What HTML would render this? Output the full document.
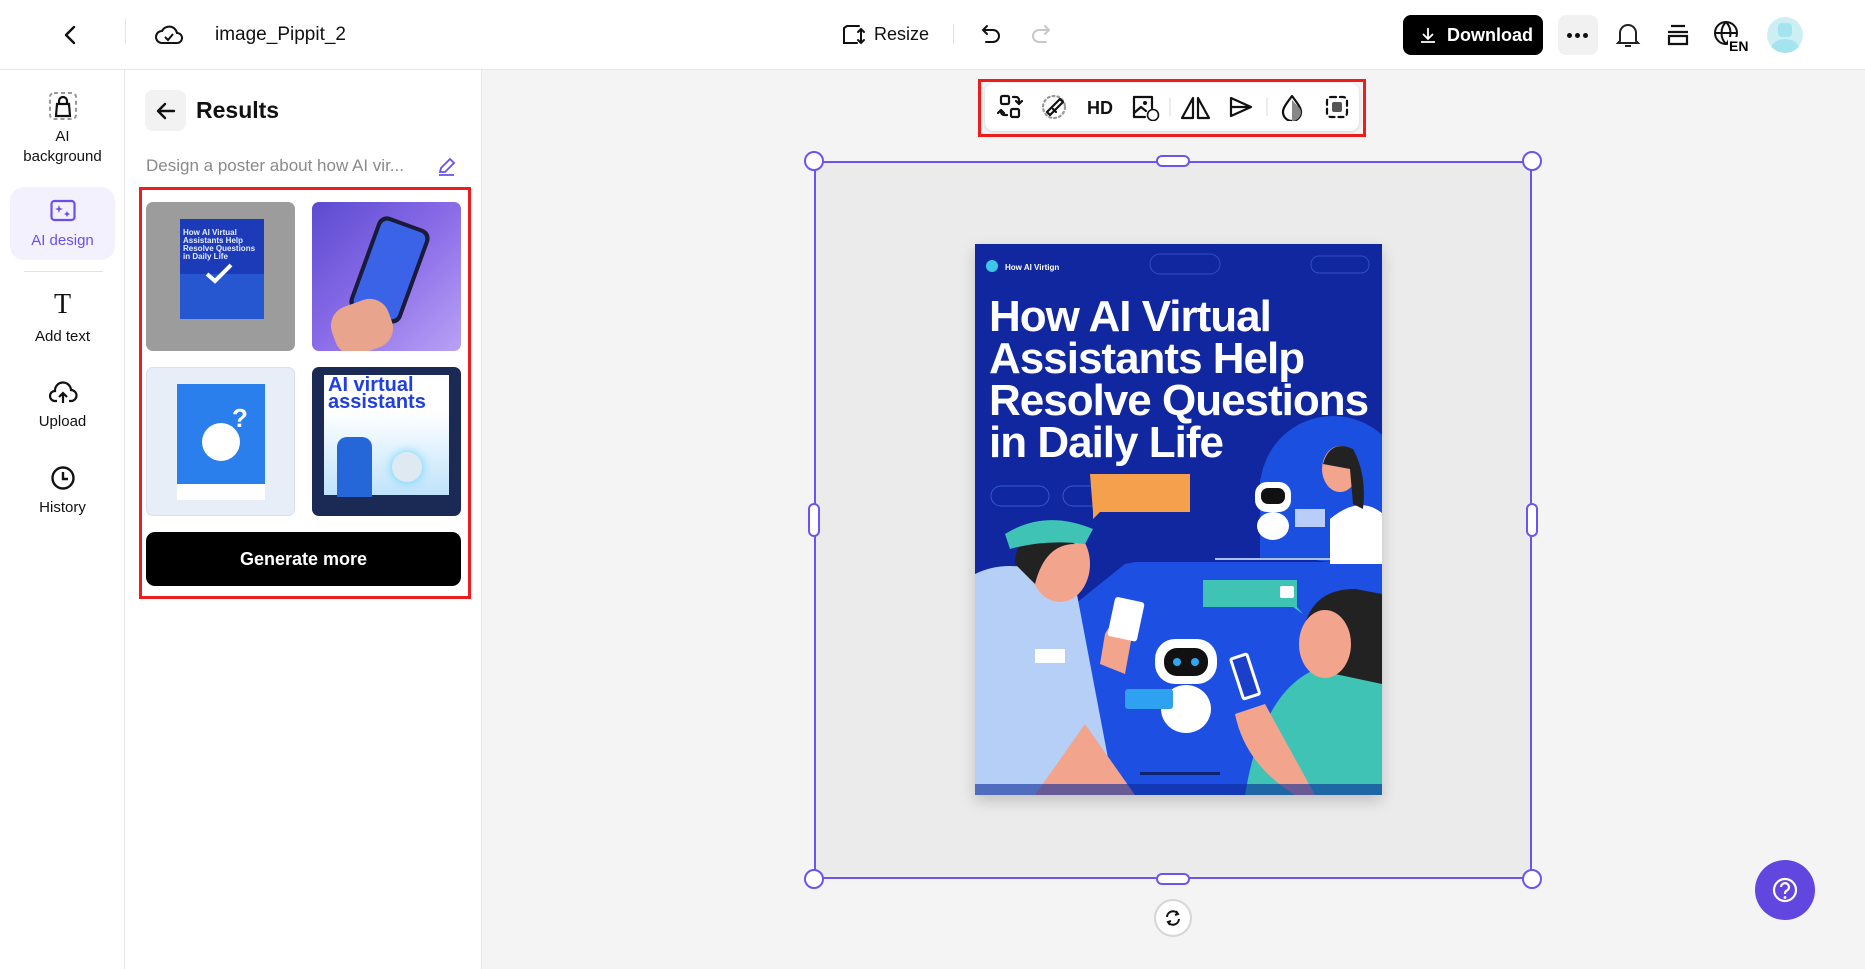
<!DOCTYPE html>
<html><head><meta charset="utf-8"><style>
*{margin:0;padding:0;box-sizing:border-box}
body{width:1865px;height:969px;overflow:hidden;background:#f4f4f4;font-family:"Liberation Sans",sans-serif;position:relative;color:#111}
.abs{position:absolute}
svg{display:block}
.top{left:0;top:0;width:1865px;height:70px;background:#fff;border-bottom:1px solid #e6e6e6}
.rail{left:0;top:70px;width:125px;height:899px;background:#fff;border-right:1px solid #e6e6e6}
.panel{left:125px;top:70px;width:357px;height:899px;background:#fff;border-right:1px solid #e6e6e6}
.lbl{width:125px;text-align:center;font-size:15px;color:#111;line-height:20px}
.thumb{border-radius:7px;overflow:hidden}
</style></head><body>
<div class="abs top"></div>
<div class="abs rail"></div>
<div class="abs panel"></div>

<!-- top bar -->
<svg class="abs" style="left:60px;top:24px" width="22" height="22" viewBox="0 0 22 22"><path d="M14 3 L6 11 L14 19" fill="none" stroke="#111" stroke-width="2.4" stroke-linecap="round" stroke-linejoin="round"/></svg>
<div class="abs" style="left:125px;top:18px;width:1px;height:26px;background:#e6e6e6"></div>
<svg class="abs" style="left:154px;top:22px" width="30" height="24" viewBox="0 0 30 24"><path d="M8 21 H23 A5 5 0 0 0 23 11 A8 8 0 0 0 8 9 A6 6 0 0 0 8 21 Z" fill="none" stroke="#111" stroke-width="2"/><path d="M11 15 L14 18 L19 12" fill="none" stroke="#111" stroke-width="2"/></svg>
<div class="abs" style="left:215px;top:24px;font-size:19px;width:130px;overflow:hidden;white-space:nowrap">image_Pippit_20</div>

<svg class="abs" style="left:841px;top:23px" width="26" height="24" viewBox="0 0 26 24"><path d="M3 5 V20 H16 M6 3 H18 M3 5 L6 3 M20 6 V20 M17 9 L20 6 L23 9 M17 17 L20 20 L23 17" fill="none" stroke="#111" stroke-width="2" stroke-linecap="round"/></svg>
<div class="abs" style="left:874px;top:24px;font-size:18px">Resize</div>
<div class="abs" style="left:953px;top:24px;width:1px;height:20px;background:#e0e0e0"></div>
<svg class="abs" style="left:979px;top:22px" width="24" height="24" viewBox="0 0 24 24"><path d="M8 4 L4 8 L8 12 M4 8 H14 A6 6 0 0 1 14 20 H7" fill="none" stroke="#111" stroke-width="2" stroke-linecap="round"/></svg>
<svg class="abs" style="left:1029px;top:22px" width="24" height="24" viewBox="0 0 24 24"><path d="M16 4 L20 8 L16 12 M20 8 H10 A6 6 0 0 0 10 20 H17" fill="none" stroke="#c8c8c8" stroke-width="2" stroke-linecap="round"/></svg>

<div class="abs" style="left:1403px;top:15px;width:140px;height:40px;background:#000;border-radius:8px;color:#fff;font-weight:bold;font-size:18px;line-height:40px;padding-left:44px">Download</div>
<svg class="abs" style="left:1419px;top:26px" width="18" height="18" viewBox="0 0 18 18"><path d="M9 2 V12 M4 8 L9 13 L14 8 M2 16 H16" fill="none" stroke="#fff" stroke-width="1.8"/></svg>
<div class="abs" style="left:1558px;top:15px;width:40px;height:40px;background:#f1f1f1;border-radius:8px"></div>
<div class="abs" style="left:1567px;top:33px;width:5px;height:5px;border-radius:50%;background:#111;box-shadow:8px 0 #111,16px 0 #111"></div>
<svg class="abs" style="left:1615px;top:21px" width="26" height="28" viewBox="0 0 26 28"><path d="M5 20 V12 A8 8 0 0 1 21 12 V20 L23 22 H3 Z M10 25 H16" fill="none" stroke="#222" stroke-width="2"/></svg>
<svg class="abs" style="left:1666px;top:22px" width="24" height="26" viewBox="0 0 24 26"><path d="M5 4 H19 M2 10 H22 M3 14 H21 V22 H3 Z" fill="none" stroke="#111" stroke-width="2.2"/></svg>
<svg class="abs" style="left:1713px;top:20px" width="36" height="32" viewBox="0 0 36 32"><circle cx="13" cy="13" r="11" fill="none" stroke="#111" stroke-width="2"/><path d="M2 13 H24 M13 2 C7 8 7 18 13 24 M13 2 C19 8 19 18 13 24" fill="none" stroke="#111" stroke-width="2"/><rect x="15" y="17" width="21" height="15" fill="#fff"/><text x="16" y="31" font-size="14" font-weight="bold" font-family="Liberation Sans">EN</text></svg>
<div class="abs" style="left:1767px;top:17px;width:36px;height:36px;border-radius:50%;background:#cdeff4;overflow:hidden"><div style="position:absolute;left:11px;top:6px;width:14px;height:14px;background:#a4e4ee;border-radius:4px"></div><div style="position:absolute;left:4px;top:22px;width:28px;height:20px;background:#a4e4ee;border-radius:50%"></div></div>

<!-- rail -->
<svg class="abs" style="left:49px;top:92px" width="28" height="28" viewBox="0 0 28 28"><rect x="1" y="1" width="26" height="26" rx="4" fill="none" stroke="#999" stroke-width="2" stroke-dasharray="4 3"/><path d="M7 24 L8 12 H20 L21 24 Z M10 12 V9 A4 4 0 0 1 18 9 V12" fill="none" stroke="#111" stroke-width="2.2"/></svg>
<div class="abs lbl" style="left:0;top:127px">AI<br>background</div>
<div class="abs" style="left:10px;top:187px;width:105px;height:73px;background:#f3f1fe;border-radius:14px"></div>
<svg class="abs" style="left:50px;top:199px" width="26" height="24" viewBox="0 0 26 24"><rect x="1.5" y="2" width="23" height="19" rx="3" fill="none" stroke="#6a4ff0" stroke-width="2.2"/><path d="M9 6 L10 9 L13 10 L10 11 L9 14 L8 11 L5 10 L8 9 Z M17 12 L18 14 L20 15 L18 16 L17 18 L16 16 L14 15 L16 14Z" fill="#6a4ff0"/></svg>
<div class="abs lbl" style="left:0;top:231px;color:#6a4ff0">AI design</div>
<div class="abs" style="left:24px;top:271px;width:79px;height:1px;background:#e3e3e3"></div>
<div class="abs lbl" style="left:0;top:290px;font-size:28px;line-height:30px;font-family:'Liberation Serif',serif">T</div>
<div class="abs lbl" style="left:0;top:327px">Add text</div>
<svg class="abs" style="left:48px;top:380px" width="30" height="26" viewBox="0 0 30 26"><path d="M9 21 H7 A5 5 0 0 1 7 11 A8 8 0 0 1 23 10 A5.5 5.5 0 0 1 23 21 H21 M15 23 V13 M11 17 L15 13 L19 17" fill="none" stroke="#111" stroke-width="2.2"/></svg>
<div class="abs lbl" style="left:0;top:412px">Upload</div>
<svg class="abs" style="left:50px;top:465px" width="26" height="26" viewBox="0 0 26 26"><circle cx="13" cy="13" r="10.5" fill="none" stroke="#111" stroke-width="2.4"/><path d="M13 7 V14 H18" fill="none" stroke="#111" stroke-width="2.4"/></svg>
<div class="abs lbl" style="left:0;top:498px">History</div>

<!-- panel -->
<div class="abs" style="left:145px;top:90px;width:41px;height:41px;background:#f2f2f2;border-radius:8px"></div>
<svg class="abs" style="left:155px;top:100px" width="22" height="22" viewBox="0 0 22 22"><path d="M19 11 H3 M10 4 L3 11 L10 18" fill="none" stroke="#111" stroke-width="2.4" stroke-linecap="round" stroke-linejoin="round"/></svg>
<div class="abs" style="left:196px;top:97px;font-size:23px;font-weight:bold">Results</div>
<div class="abs" style="left:146px;top:156px;font-size:17px;color:#8a8a8a">Design a poster about how AI vir...</div>
<svg class="abs" style="left:437px;top:157px" width="20" height="20" viewBox="0 0 20 20"><path d="M3 15 L4 11 L13 2 L17 6 L8 15 Z M2 18 H17" fill="none" stroke="#6a4ff0" stroke-width="1.8"/></svg>
<div class="abs" style="left:139px;top:187px;width:332px;height:412px;border:3px solid #ee1c1c"></div>

<div class="abs thumb" style="left:146px;top:202px;width:149px;height:149px;background:#9c9c9c">
 <div style="position:absolute;left:34px;top:17px;width:84px;height:100px;background:#1c3bb8">
  <div style="position:absolute;left:3px;top:10px;font-size:8px;line-height:8px;color:#e8ecff;font-weight:bold">How AI Virtual Assistants Help Resolve Questions in Daily Life</div>
  <div style="position:absolute;left:0;bottom:0;width:84px;height:45px;background:#2a5fd6;opacity:.8"></div>
 </div>
 <svg style="position:absolute;left:58px;top:60px" width="30" height="22" viewBox="0 0 30 22"><path d="M3 12 L11 19 L27 3" fill="none" stroke="#fff" stroke-width="4"/></svg>
</div>
<div class="abs thumb" style="left:312px;top:202px;width:149px;height:149px;background:linear-gradient(135deg,#5b4bd0,#8a6ce8 50%,#b8a2f4)">
 <div style="position:absolute;left:50px;top:18px;width:55px;height:100px;background:#1a1a3a;border-radius:10px;transform:rotate(20deg)"><div style="position:absolute;left:4px;top:4px;right:4px;bottom:4px;background:#3b63e8;border-radius:7px"></div></div>
 <div style="position:absolute;left:20px;top:100px;width:60px;height:50px;background:#e8a48c;border-radius:20px;transform:rotate(-20deg)"></div>
</div>
<div class="abs thumb" style="left:146px;top:367px;width:149px;height:149px;background:#e7eef8;border:1px solid #d8e0ea">
 <div style="position:absolute;left:30px;top:16px;width:88px;height:100px;background:#2b7fec"></div>
 <div style="position:absolute;left:30px;top:116px;width:88px;height:16px;background:#fff"></div>
 <div style="position:absolute;left:55px;top:55px;width:38px;height:38px;border-radius:50%;background:#fff"></div>
 <div style="position:absolute;left:85px;top:35px;color:#fff;font-weight:bold;font-size:26px">?</div>
</div>
<div class="abs thumb" style="left:312px;top:367px;width:149px;height:149px;background:#1a2a55">
 <div style="position:absolute;left:12px;top:8px;width:125px;height:120px;background:linear-gradient(#fff 30%,#bfe3fb)"></div>
 <div style="position:absolute;left:16px;top:10px;font-size:20px;line-height:17px;font-weight:bold;color:#1f3fe0">AI virtual<br>assistants</div>
 <div style="position:absolute;left:25px;top:70px;width:35px;height:60px;background:#2566d8;border-radius:10px 10px 0 0"></div>
 <div style="position:absolute;left:80px;top:85px;width:30px;height:30px;background:#dfe9f2;border-radius:50%;box-shadow:0 0 10px #5fd3ff"></div>
</div>
<div class="abs" style="left:146px;top:532px;width:315px;height:54px;background:#000;border-radius:9px;color:#fff;font-weight:bold;font-size:18px;text-align:center;line-height:54px">Generate more</div>

<!-- floating toolbar -->
<div class="abs" style="left:985px;top:83px;width:374px;height:48px;background:#fff;border-radius:9px;box-shadow:0 1px 4px rgba(0,0,0,.12)"></div>
<div class="abs" style="left:978px;top:79px;width:388px;height:58px;border:3px solid #ee1c1c"></div>
<svg class="abs" style="left:997px;top:93px" width="362" height="28" viewBox="0 0 362 28">
 <g fill="none" stroke="#111" stroke-width="2.2" stroke-linecap="round" stroke-linejoin="round">
  <rect x="4" y="3" width="8" height="8" rx="1.5"/><rect x="14" y="16" width="8" height="8" rx="1.5"/>
  <path d="M16 4 H19 A3 3 0 0 1 22 7 V10 M19 8 L22 11 L25 8 M10 22 H7 A3 3 0 0 1 4 19 V17 M1 20 L4 17 L7 20"/>
  <circle cx="57" cy="14" r="11" stroke="#999" stroke-dasharray="2 3"/>
  <path d="M53 22 L50 19 L63 6 L66 9 Z M56 16 L59 19"/>
  <path d="M137 4 H155 V15 M137 4 V24 H148 M137 20 L144 14 L149 18"/>
  <path d="M196 5 V25 H185 Z M201 5 V25 H212 Z"/>
  <path d="M234 5 L254 14 L234 23 Z M234 14 H254"/>
  <path d="M295 3 C289 11 286 15 286 19 A9 9 0 0 0 304 19 C304 15 301 11 295 3 Z"/>
  <rect x="330" y="4" width="20" height="20" rx="4" stroke-dasharray="5 4"/>
 </g>
 <text x="90" y="21" font-family="Liberation Sans" font-weight="bold" font-size="18" fill="#111">HD</text>
 <circle cx="156" cy="22" r="5.5" fill="#fff" stroke="#111" stroke-width="1.6"/>
 <circle cx="148" cy="10" r="2" fill="#111"/>
 <path d="M295 7 C299 12 304 15 304 19 A9 9 0 0 1 295 28 Z" fill="#888"/>
 <rect x="335" y="9" width="10" height="10" rx="2" fill="#555"/>
 <path d="M173 5 V23 M270 5 V23" stroke="#e0e0e0" stroke-width="1.2"/>
</svg>

<!-- artboard / selection -->
<div class="abs" style="left:814px;top:161px;width:718px;height:718px;background:#ebebeb;border:2.5px solid #6a55f0"></div>
<div class="abs" style="left:804px;top:151px;width:20px;height:20px;border-radius:50%;background:#fff;border:2.5px solid #6a55f0"></div>
<div class="abs" style="left:1522px;top:151px;width:20px;height:20px;border-radius:50%;background:#fff;border:2.5px solid #6a55f0"></div>
<div class="abs" style="left:804px;top:869px;width:20px;height:20px;border-radius:50%;background:#fff;border:2.5px solid #6a55f0"></div>
<div class="abs" style="left:1522px;top:869px;width:20px;height:20px;border-radius:50%;background:#fff;border:2.5px solid #6a55f0"></div>
<div class="abs" style="left:1156px;top:155px;width:34px;height:12px;border-radius:6px;background:#fff;border:2.5px solid #6a55f0"></div>
<div class="abs" style="left:1156px;top:873px;width:34px;height:12px;border-radius:6px;background:#fff;border:2.5px solid #6a55f0"></div>
<div class="abs" style="left:808px;top:503px;width:12px;height:34px;border-radius:6px;background:#fff;border:2.5px solid #6a55f0"></div>
<div class="abs" style="left:1526px;top:503px;width:12px;height:34px;border-radius:6px;background:#fff;border:2.5px solid #6a55f0"></div>

<!-- poster -->
<svg class="abs" style="left:975px;top:244px;box-shadow:0 6px 14px rgba(0,0,0,.18)" width="407" height="551" viewBox="0 0 407 551">
 <rect width="407" height="551" fill="#10279f"/>
 <path d="M0 551 V440 L150 320 L160 318 H407 V551 Z" fill="#1c4fe2"/>
 <circle cx="358" cy="245" r="73" fill="#1b4fe0"/>
 <rect x="285" y="235" width="122" height="80" fill="#1b4fe0"/>
 <line x1="240" y1="315" x2="407" y2="315" stroke="#a9c2ff" stroke-width="2"/>
 <circle cx="17" cy="22" r="6" fill="#3cc7e6"/>
 <text x="30" y="26" font-family="Liberation Sans" font-size="8" font-weight="bold" fill="#fff">How AI Virtign</text>
 <rect x="175" y="10" width="70" height="20" rx="10" fill="none" stroke="#3050c0"/>
 <rect x="336" y="12" width="58" height="17" rx="8" fill="none" stroke="#3050c0"/>
 <g font-family="Liberation Sans" font-weight="bold" font-size="44" fill="#fff" letter-spacing="-1">
  <text x="14" y="87">How AI Virtual</text>
  <text x="14" y="129">Assistants Help</text>
  <text x="14" y="171">Resolve Questions</text>
  <text x="14" y="213">in Daily Life</text>
 </g>
 <rect x="16" y="242" width="58" height="20" rx="10" fill="none" stroke="#3658d0"/>
 <rect x="88" y="242" width="57" height="20" rx="10" fill="none" stroke="#3658d0"/>
 <path d="M115 230 H215 V268 H125 L118 275 V268 Z" fill="#f4a04c"/>
 <path d="M228 336 H322 V363 L328 370 L318 363 H228 Z" fill="#3ec3b5"/>
 <rect x="305" y="342" width="14" height="12" rx="2" fill="#fff"/>
 <rect x="280" y="238" width="36" height="30" rx="12" fill="#fff"/><rect x="286" y="244" width="24" height="16" rx="7" fill="#111"/>
 <ellipse cx="298" cy="282" rx="16" ry="14" fill="#fff"/>
 <rect x="320" y="265" width="30" height="18" fill="#b9cdf9"/>
 <path d="M355 320 V275 Q385 250 408 270 V320 Z" fill="#fff"/>
 <ellipse cx="365" cy="225" rx="18" ry="23" fill="#f3a48c"/>
 <path d="M348 220 Q355 195 378 205 Q392 230 388 265 L378 260 L375 225 Z" fill="#222"/>
 <path d="M0 330 Q40 310 100 340 L140 551 H0 Z" fill="#b6cff7"/>
 <path d="M110 480 L160 551 H60 Z" fill="#f3a48c"/>
 <ellipse cx="85" cy="320" rx="30" ry="38" fill="#f3a48c"/>
 <path d="M40 320 Q40 285 85 290 L100 300 Q70 300 60 340 Z" fill="#222"/>
 <path d="M30 290 Q70 265 118 285 L110 300 Q70 295 35 305 Z" fill="#3ec3b5"/>
 <rect x="60" y="405" width="30" height="14" fill="#fff"/>
 <path d="M130 390 Q140 370 160 375 L150 430 L125 420 Z" fill="#f3a48c"/>
 <rect x="136" y="355" width="30" height="40" rx="3" fill="#fff" transform="rotate(12 150 375)"/>
 <rect x="180" y="395" width="62" height="45" rx="20" fill="#fff"/><rect x="189" y="404" width="44" height="28" rx="13" fill="#111"/>
 <circle cx="202" cy="418" r="4" fill="#2ea7f0"/><circle cx="220" cy="418" r="4" fill="#2ea7f0"/>
 <ellipse cx="211" cy="465" rx="25" ry="24" fill="#fff"/>
 <rect x="150" y="445" width="48" height="20" rx="3" fill="#2ea1f0"/>
 <rect x="165" y="528" width="80" height="3" fill="#0d2470"/>
 <path d="M270 551 Q290 430 360 420 L407 430 V551 Z" fill="#3ec3b5"/>
 <path d="M330 380 Q340 345 380 345 L407 350 V440 L360 430 Z" fill="#222"/>
 <ellipse cx="350" cy="400" rx="26" ry="34" fill="#f3a48c"/>
 <path d="M260 470 Q270 520 320 551 L340 551 L290 460 Z" fill="#f3a48c"/>
 <rect x="260" y="410" width="20" height="45" rx="3" fill="#fff" transform="rotate(-18 270 432)"/>
 <rect x="263" y="413" width="14" height="39" fill="#1b3fc8" transform="rotate(-18 270 432)"/>
 <rect x="0" y="540" width="407" height="11" fill="#0c2a9a" opacity=".6"/>
</svg>

<!-- rotate & help -->
<div class="abs" style="left:1154px;top:899px;width:38px;height:38px;border-radius:50%;background:#fff;border:2px solid #d6d6d6"></div>
<svg class="abs" style="left:1163px;top:908px" width="20" height="20" viewBox="0 0 20 20"><path d="M4 9 A6 6 0 0 1 15 6 M16 11 A6 6 0 0 1 5 14 M13 3 L15 6 L12 7 M7 17 L5 14 L8 13" fill="none" stroke="#111" stroke-width="2"/></svg>
<div class="abs" style="left:1755px;top:860px;width:60px;height:60px;border-radius:50%;background:#6146e0"></div>
<svg class="abs" style="left:1771px;top:876px" width="28" height="28" viewBox="0 0 28 28"><circle cx="14" cy="14" r="11" fill="none" stroke="#fff" stroke-width="2.2"/><path d="M10 11 A4 4 0 1 1 15 15 Q14 16 14 18" fill="none" stroke="#fff" stroke-width="2.2"/><circle cx="14" cy="21.5" r="1.4" fill="#fff"/></svg>
</body></html>
